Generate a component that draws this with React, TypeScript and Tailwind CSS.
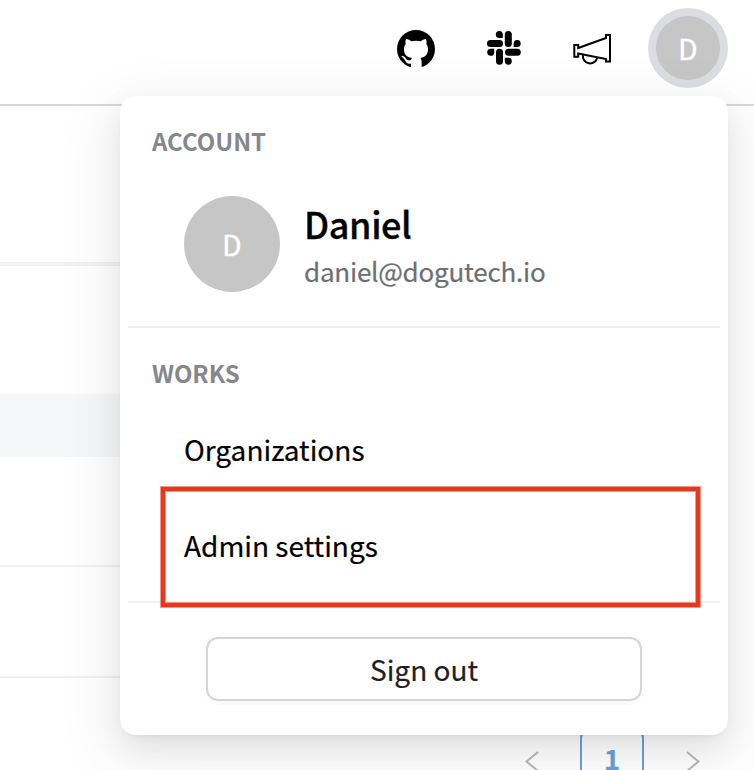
import React from "react";

const GitHub = () => (
  <svg className="mr-[52px] mt-px" width="38" height="38" viewBox="0 0 114 114">
    <mask id="cat">
      <circle cx="57" cy="57" r="57" fill="#fff" />
      <path
        fill="#000"
        d="M27 27C33 27 39 30 43 34C52 32 62 32 71 34C75 30 81 27 87 27C89 33 89 38 88 42C92 47 93 52 93 58C93 74 85 81 70 84C73 87 74 92 74 97V116H42V101C31 103 27 97 24 91C21 86 17 82 13 79C18 76 23 80 27 86C30 91 36 92 42 90C42 88 43 86 45 84C29 81 21 74 21 58C21 52 22 47 26 42C25 38 25 33 27 27Z"
      />
    </mask>
    <rect width="114" height="114" fill="#000" mask="url(#cat)" />
  </svg>
);

const Slack = () => (
  <svg width="34" height="34" viewBox="0 0 34 34" fill="#000">
    <path d="M12.3 0a3.5 3.5 0 1 0 0 7h3.5V3.5A3.5 3.5 0 0 0 12.3 0z" />
    <rect x="17.8" y="0" width="7" height="16" rx="3.5" />
    <rect x="0" y="9" width="16" height="7" rx="3.5" />
    <path d="M26.7 12.5a3.5 3.5 0 1 1 3.6 3.5h-3.6z" />
    <path d="M7.2 21.4a3.5 3.5 0 1 1-3.6-3.6h3.6z" />
    <rect x="18" y="17.8" width="15.8" height="7" rx="3.5" />
    <rect x="9" y="17.8" width="7" height="16" rx="3.5" />
    <path d="M17.8 26.7h3.5a3.5 3.5 0 1 1-3.5 3.6z" />
  </svg>
);

const Megaphone = () => (
  <svg width="40" height="34" viewBox="0 0 40 34" fill="none" stroke="#000" strokeWidth="2">
    <path d="M2.3 14H6.2V17L34 7V4H38V30.5H34V28L6.2 22.5V25.7H2.3Z" />
    <path d="M11 24a7.2 7.2 0 0 0 14.2 2.5" />
  </svg>
);

const Chevron = ({ d }: { d: string }) => (
  <svg width="14" height="20" viewBox="0 0 14 20" fill="none" stroke="#b8b8b8" strokeWidth="2">
    <path d={d} />
  </svg>
);

export default function App() {
  return (
    <div className="relative h-[770px] w-[754px] overflow-hidden bg-white font-['Noto_Sans_CJK_KR','Noto_Sans',sans-serif] text-black">
      <header className="flex h-[106px] items-start border-b-2 border-[#d5dadd] pl-[397px] pt-2">
        <div className="flex h-20 items-center">
          <GitHub />
          <Slack />
          <div className="ml-[51px]">
            <Megaphone />
          </div>
        </div>
        <div className="ml-auto mr-[26px] flex size-20 items-center justify-center rounded-full bg-[#dcdde4]">
          <div className="flex size-16 items-center justify-center rounded-full bg-[#c6c6c6] text-[28px] leading-none text-white [-webkit-text-stroke:0.5px_white]">D</div>
        </div>
      </header>
      <main>
        <div className="w-[700px]">
          <div className="h-[160px] border-b-4 border-[#eff1f3]" />
          <div className="h-32" />
          <div className="h-[63px] bg-[#f5f7f9]" />
          <div className="h-[110px] border-b-2 border-[#f0f0f0]" />
          <div className="h-[111px] border-b-2 border-[#f0f0f0]" />
        </div>
        <div className="flex items-start pl-[525px] pt-12">
          <div className="mt-[25px]"><Chevron d="M13 1 1.5 10.5 13 20" /></div>
          <div className="ml-[41px] flex h-16 w-16 items-center justify-center rounded-xl border-2 border-[#69a1df] text-[28px] font-bold leading-none text-[#69a1df]">1</div>
          <div className="ml-[42px] mt-[25px]"><Chevron d="M1 1 12.5 10.5 1 20" /></div>
        </div>
      </main>
      <div className="absolute left-[120px] top-[96px] h-[639px] w-[608px] rounded-2xl bg-white px-2 shadow-[0_12px_32px_0_rgba(0,0,0,0.08),0_6px_12px_-8px_rgba(0,0,0,0.12),0_18px_56px_16px_rgba(0,0,0,0.05)]">
        <section className="h-[232px] border-b-2 border-[#f0f0f0] px-6 pt-[29px]">
          <h2 className="text-[24px] font-bold leading-8 text-[#86878e]">ACCOUNT</h2>
          <div className="flex pl-8 pt-[39px]">
            <div className="flex size-24 items-center justify-center rounded-full bg-[#c6c6c6] text-[28px] leading-none text-white [-webkit-text-stroke:0.5px_white]">D</div>
            <div className="pl-6 pt-[3px]">
              <div className="text-[36px] font-medium leading-[48px] tracking-[-0.4px] [-webkit-text-stroke:0.3px_black]">Daniel</div>
              <div className="mt-[2px] text-[26px] leading-[44px] tracking-[-0.22px] text-[#6d6e73] [-webkit-text-stroke:0.2px_#6d6e73]">daniel@dogutech.io</div>
            </div>
          </div>
        </section>
        <section className="relative h-[275px] border-b-2 border-[#f0f0f0] px-6 pt-[29px]">
          <h2 className="text-[24px] font-bold leading-8 text-[#86878e]">WORKS</h2>
          <ul className="pl-8 pt-3 text-[28px] [-webkit-text-stroke:0.2px_black]">
            <li className="flex h-24 items-center">Organizations</li>
            <li className="flex h-24 items-center">Admin settings</li>
          </ul>
          <div className="absolute left-[33px] top-[159px] h-[120px] w-[539px] border-4 border-[#e5381e] shadow-[0_0_0_1px_rgba(229,56,30,0.5),inset_0_0_0_1px_rgba(229,56,30,0.5)]" />
        </section>
        <div className="flex justify-center pt-[34px]">
          <button className="h-16 w-[436px] rounded-xl border-2 border-[#d5d5d5] text-[28px] leading-none text-[#1f1f1f] shadow-[0_4px_0_rgba(0,0,0,0.02)] [-webkit-text-stroke:0.2px_#1f1f1f]">Sign out</button>
        </div>
      </div>
    </div>
  );
}
